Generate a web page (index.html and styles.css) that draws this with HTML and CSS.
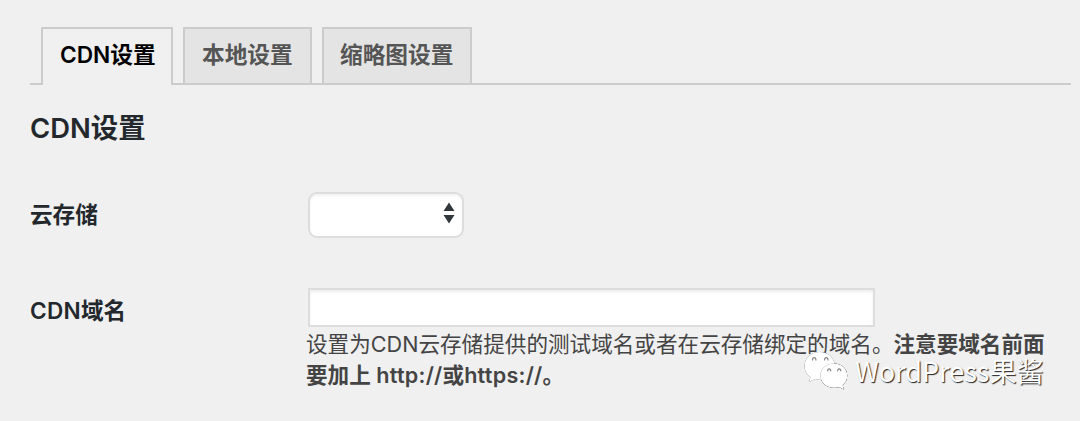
FILE: index.html
```html
<!DOCTYPE html>
<html lang="zh-CN">
<head>
<meta charset="utf-8">
<title>CDN设置</title>
<link rel="stylesheet" href="styles.css">
</head>
<body>
<main class="page">
  <nav class="tabs">
    <a class="tab tab-active">CDN设置</a>
    <a class="tab">本地设置</a>
    <a class="tab">缩略图设置</a>
  </nav>
  <h2 class="title">CDN设置</h2>
  <div class="row row-select">
    <div class="label">云存储</div>
    <div class="select">
      <svg class="arrows" width="12" height="22" viewBox="0 0 12 22"><path d="M6 0.5 11.500 9H.5zM6 21.500 11.500 13H.5z" fill="#32373c"/></svg>
    </div>
  </div>
  <div class="row row-domain">
    <div class="label"><span class="latin">CDN</span>域名</div>
    <div class="field">
      <input class="input" type="text">
      <p class="description">设置为CDN云存储提供的测试域名或者在云存储绑定的域名。<strong>注意要域名前面<br>要加上 <span class="url">http://</span>或<span class="url">https://</span>。</strong></p>
    </div>
  </div>
  <div class="watermark">
    <svg class="wechat" width="48" height="42" viewBox="0 0 48 42">
      <g fill="#fff">
        <path d="M17 2C8 2 1.500 8.400 1.500 16c0 4.700 2.300 8.500 6 11l-1.500 5 6-3c2 .6 4 .9 6.500.8L32 15C30.500 7 25 2 17 2z"/>
        <path class="bubble-front" d="M31 13.500c-8 0-13.500 5.200-13.500 12s5.500 12.300 13.500 12.300c2 0 3.500-.3 5.200-.8l4.600 2.500-1.200-4.500c3.100-2.300 4.600-5.500 4.600-9.500 0-6.800-5.600-12-13.200-12z"/>
      </g>
      <path d="M9.700 10.500a1.700 1.900 0 1 1 3 0M21.800 10.500a1.700 1.900 0 1 1 3 0M24.800 21.200a1.500 1.700 0 1 1 2.800 0M34.800 21.200a1.500 1.700 0 1 1 2.800 0" fill="none" stroke="#888" stroke-width="1.200"/>
    </svg>
    <span class="watermark-text">WordPress果酱</span>
  </div>
</main>
</body>
</html>
```
FILE: styles.css
```css
* { box-sizing: border-box; }
body {
  margin: 0;
  background: #f0f0f0;
  color: #23282d;
  font-family: Inter, "Noto Sans CJK SC", sans-serif;
}
.page {
  position: relative;
  height: 421px;
  padding: 27px 9px 0 30px;
  overflow: hidden;
}
.tabs {
  display: flex;
  gap: 10px;
  height: 58px;
  padding-left: 11px;
  border-bottom: 2px solid #ccc;
}
.tab {
  height: 56px;
  padding: 0 0 0 17px;
  width: 129px;
  border: 2px solid #ccc;
  border-bottom: 0;
  background: #e4e4e4;
  color: #555;
  font-size: 22.700px;
  font-weight: 600;
  line-height: 52px;
  white-space: nowrap;
}
.tab:last-child {
  width: 150px;
  padding-left: 16px;
}
.tab-active {
  width: 132px;
  height: 58px;
  background: #f0f0f0;
  color: #000;
}
.title {
  margin: 23px 0 0;
  font-size: 27.400px;
  font-weight: 600;
  line-height: 40px;
}
.row { display: flex; }
.row-select { margin-top: 44px; }
.row-domain { margin-top: 50px; }
.label {
  width: 277px;
  flex: none;
  font-size: 22.600px;
  font-weight: 600;
  line-height: 45px;
}
.latin { letter-spacing: .3px; }
.url { letter-spacing: .25px; }
.select {
  display: flex;
  align-items: center;
  justify-content: flex-end;
  width: 156px;
  height: 46px;
  margin-left: 1px;
  padding: 0 7px 5px 0;
  border: 2px solid #ddd;
  border-radius: 9px;
  background: #fff;
  box-shadow: inset 0 2px 3px rgba(0, 0, 0, .05);
}
.input {
  display: block;
  width: 567px;
  height: 39px;
  margin-left: 1px;
  border: 2px solid #ddd;
  background: #fff;
  box-shadow: inset 0 2px 3px rgba(0, 0, 0, .07);
}
.description {
  margin: 2px 0 0 -1px;
  color: #444;
  font-size: 21.600px;
  line-height: 31px;
  white-space: nowrap;
}
.description strong { font-weight: 600; }
.watermark {
  position: absolute;
  left: 803px;
  top: 350px;
  display: flex;
  gap: 4px;
}
.wechat { filter: drop-shadow(0 0 .6px #444); }
.bubble-front { filter: drop-shadow(0 0 .7px #555); }
.watermark-text {
  color: #fff;
  font-family: "Noto Sans CJK SC", sans-serif;
  font-size: 27px;
  font-weight: 400;
  line-height: 42px;
  text-shadow: 1px 1px 1px #222;
  white-space: nowrap;
}
```
